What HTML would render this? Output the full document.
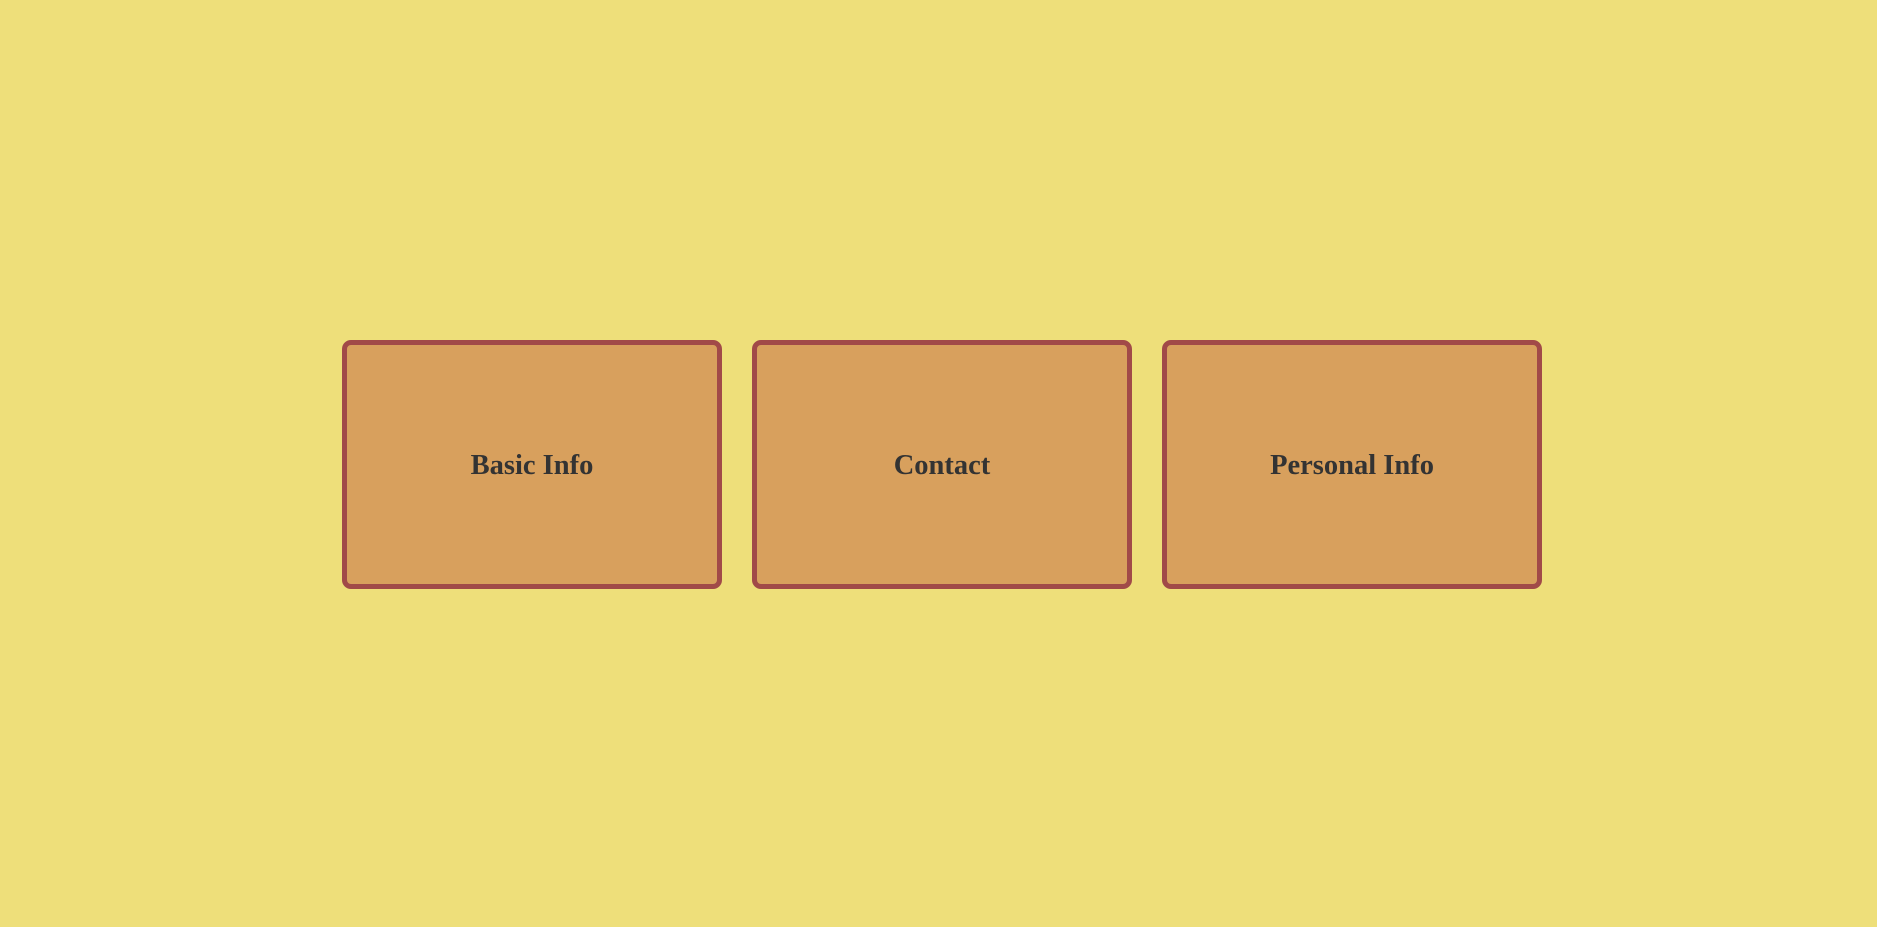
<!DOCTYPE html>
<html><head><style>
html,body{margin:0;padding:0;width:1877px;height:927px;background:#eedf7a;overflow:hidden}
.b{position:absolute;top:340px;width:370px;height:236px;padding-top:3px;border:5px solid #a14a48;border-radius:9px;background:#d8a05d;display:flex;align-items:center;justify-content:center;font-family:"Liberation Serif",serif;font-weight:bold;font-size:28.5px;color:#333;}
</style></head><body>
<div class="b" style="left:342px">Basic Info</div>
<div class="b" style="left:752px">Contact</div>
<div class="b" style="left:1162px">Personal Info</div>
</body></html>
